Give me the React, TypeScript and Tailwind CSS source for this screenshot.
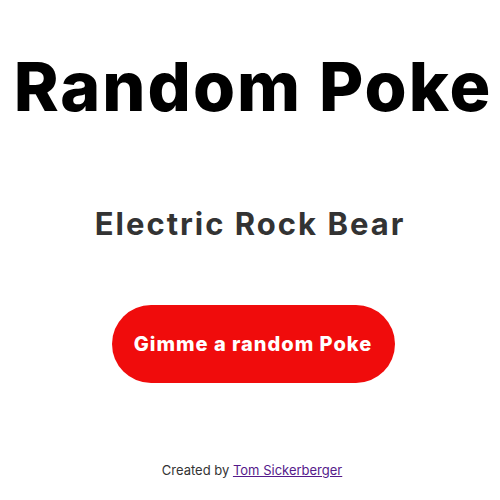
export default function App() {
  return (
    <div className="flex min-h-[500px] w-full flex-col items-center bg-white font-['Inter',sans-serif] text-[#333]">
      <h1 className="mt-[46px] whitespace-nowrap pl-[6px] text-[68px] font-extrabold leading-[80px] tracking-[2px] text-black">
        Random Poke
      </h1>

      <h2 className="mt-[78px] text-[31px] font-bold leading-[40px] tracking-[2px] text-[#333]">
        Electric Rock Bear
      </h2>

      <button className="ml-[6px] mt-[61px] flex h-[78px] w-[283px] items-center justify-center rounded-full bg-[#f00c0c] text-[20px] font-extrabold tracking-[1px] text-white">
        Gimme a random Poke
      </button>

      <footer className="ml-[4px] mt-[78px] text-[13px] text-[#333]">
        Created by{" "}
        <a href="#" className="text-[#551a8b] underline">
          Tom Sickerberger
        </a>
      </footer>
    </div>
  );
}
